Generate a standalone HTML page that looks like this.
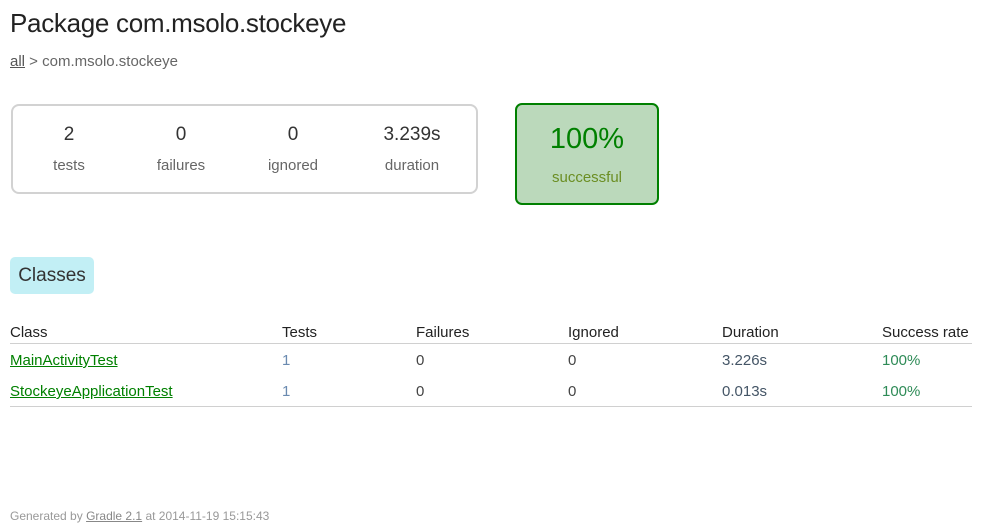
<!DOCTYPE html>
<html><head><meta charset="utf-8"><style>
*{margin:0;padding:0;box-sizing:border-box}
body{width:982px;height:525px;background:#fff;font-family:"Liberation Sans",sans-serif;color:#444;position:relative;overflow:hidden}
.a{position:absolute;white-space:nowrap}
h1{position:absolute;left:10px;top:8px;font-size:26px;font-weight:normal;color:#222;letter-spacing:-0.3px}
.bc{left:10px;top:53px;font-size:15px;color:#666}
.bc span{text-decoration:underline;color:#555}
.sum{position:absolute;left:11px;top:104px;width:467px;height:90px;border:2px solid #d2d2d2;border-radius:8px}
.num{font-size:19px;color:#333;text-align:center;width:120px}
.lbl{font-size:15px;color:#666;text-align:center;width:120px}
.suc{position:absolute;left:515px;top:103px;width:144px;height:102px;background:#bbd9bb;border:2px solid #008000;border-radius:7px}
.tab{position:absolute;left:10px;top:257px;width:84px;height:37px;background:#c2eff5;border-radius:5px;font-size:19px;color:#333;text-align:center;line-height:38px}
.t{font-size:15px}
.line{position:absolute;left:10px;width:962px;height:1px;background:#d0d0d0}
.g{color:#008000;text-decoration:underline}
.tn{color:#6a8ab0}
.rate{color:#2e8b57}
.dur{color:#445566}
</style></head><body>
<h1>Package com.msolo.stockeye</h1>
<div class="a bc"><span>all</span> &gt; com.msolo.stockeye</div>
<div class="sum"></div>
<div class="a num" style="left:9px;top:124px">2</div>
<div class="a num" style="left:121px;top:124px">0</div>
<div class="a num" style="left:233px;top:124px">0</div>
<div class="a num" style="left:352px;top:124px">3.239s</div>
<div class="a lbl" style="left:9px;top:157px">tests</div>
<div class="a lbl" style="left:121px;top:157px">failures</div>
<div class="a lbl" style="left:233px;top:157px">ignored</div>
<div class="a lbl" style="left:352px;top:157px">duration</div>
<div class="suc"></div>
<div class="a" style="left:515px;top:123px;width:144px;text-align:center;font-size:29px;color:#008000">100%</div>
<div class="a" style="left:515px;top:169px;width:144px;text-align:center;font-size:15px;color:#6b8e23">successful</div>
<div class="tab">Classes</div>
<div class="a t" style="left:10px;top:324px;color:#222">Class</div>
<div class="a t" style="left:282px;top:324px;color:#222">Tests</div>
<div class="a t" style="left:416px;top:324px;color:#222">Failures</div>
<div class="a t" style="left:568px;top:324px;color:#222">Ignored</div>
<div class="a t" style="left:722px;top:324px;color:#222">Duration</div>
<div class="a t" style="left:882px;top:324px;color:#222">Success rate</div>
<div class="line" style="top:343px"></div>
<div class="a t g" style="left:10px;top:352px">MainActivityTest</div>
<div class="a t tn" style="left:282px;top:352px">1</div>
<div class="a t" style="left:416px;top:352px">0</div>
<div class="a t" style="left:568px;top:352px">0</div>
<div class="a t dur" style="left:722px;top:352px">3.226s</div>
<div class="a t rate" style="left:882px;top:352px">100%</div>
<div class="a t g" style="left:10px;top:383px">StockeyeApplicationTest</div>
<div class="a t tn" style="left:282px;top:383px">1</div>
<div class="a t" style="left:416px;top:383px">0</div>
<div class="a t" style="left:568px;top:383px">0</div>
<div class="a t dur" style="left:722px;top:383px">0.013s</div>
<div class="a t rate" style="left:882px;top:383px">100%</div>
<div class="line" style="top:406px"></div>
<div class="a" style="left:10px;top:509px;font-size:12px;color:#999">Generated by <span style="text-decoration:underline;color:#888">Gradle 2.1</span> at 2014-11-19 15:15:43</div>
</body></html>
